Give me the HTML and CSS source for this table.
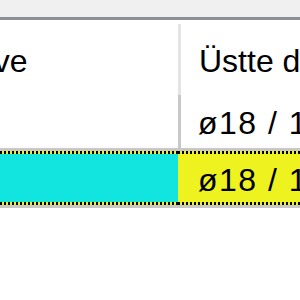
FILE: index.html
```html
<!DOCTYPE html>
<html lang="tr">
<head>
    <meta charset="UTF-8">
    <title>Kademe listesi</title>
    <link rel="stylesheet" href="styles.css">
</head>
<body>
    <div class="strip"></div>
    <div class="grid">
        <div class="head">Malzeme ve</div>
        <div class="head sep">Üstte duran çap</div>

        <div class="cell"></div>
        <div class="cell line">ø18 / 12</div>

        <div class="cell current cyan"></div>
        <div class="cell current yellow">ø18 / 12</div>
    </div>
</body>
</html>
```

FILE: styles.css
```css
body {
    margin: 0;
    background: #fff;
    overflow: hidden;
    font-family: "Liberation Sans", Arial, sans-serif;
    font-size: 32px;
    color: #000;
}
.strip {
    height: 17px;
    background: #f0f0f0;
    border-bottom: 3px solid #8c9096;
}
.grid {
    display: grid;
    grid-template-columns: 342px 400px;
    margin-left: -164px;
    line-height: 37px;
    white-space: nowrap;
}
.head {
    height: 75px;
    box-sizing: border-box;
    padding: 23px 0 0 19px;
}
.head.sep {
    padding-left: 21px;
    background: linear-gradient(#e4e4e4, #e4e4e4) no-repeat 0 4px / 3px 100%;
}
.cell {
    height: 56px;
    box-sizing: border-box;
    padding: 10px 0 0 17px;
    border-bottom: 3px solid #c8c8c8;
    letter-spacing: 1.5px;
}
.cell.line {
    border-left: 3px solid #c8c8c8;
}
/* selected row: dotted focus frame on top and bottom */
.cell.current {
    height: 57px;
    padding-top: 11px;
    background:
        repeating-linear-gradient(90deg, #000 0 2px, #eef31f 2px 4px) top / 100% 3px no-repeat,
        repeating-linear-gradient(90deg, #000 0 2px, #eef31f 2px 4px) bottom / 100% 3px no-repeat;
}
.cell.cyan {
    background-color: #12e5e0;
}
.cell.yellow {
    background-color: #eef31f;
    padding-left: 20px;
}
```
